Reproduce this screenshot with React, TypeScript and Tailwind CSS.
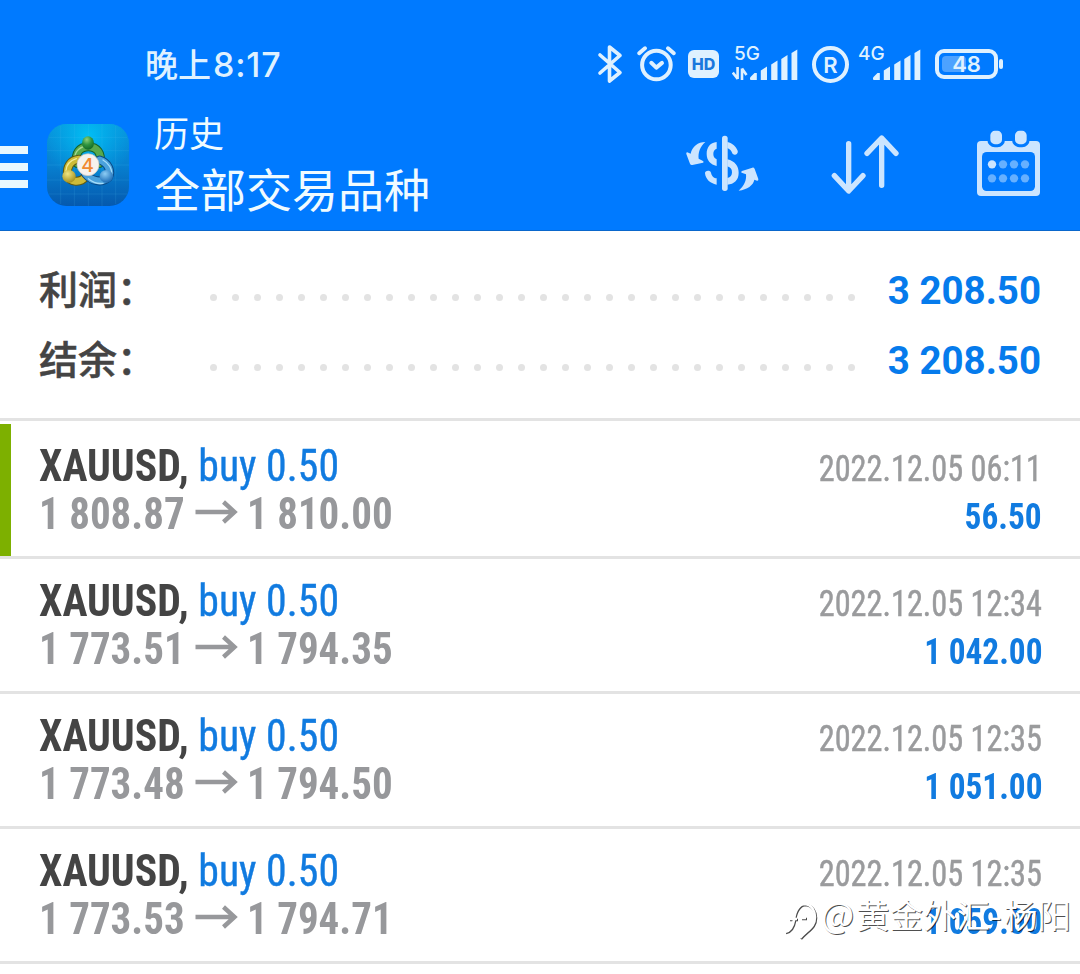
import type { ReactNode } from 'react'

interface Deal {
  open: string
  close: string
  time: string
  profit: string
  marked?: boolean
}

const deals: Deal[] = [
  { open: '1 808.87', close: '1 810.00', time: '2022.12.05 06:11', profit: '56.50', marked: true },
  { open: '1 773.51', close: '1 794.35', time: '2022.12.05 12:34', profit: '1 042.00' },
  { open: '1 773.48', close: '1 794.50', time: '2022.12.05 12:35', profit: '1 051.00' },
  { open: '1 773.53', close: '1 794.71', time: '2022.12.05 12:35', profit: '1 059.00' }
]

const totals = [
  { label: '利润：', value: '3 208.50' },
  { label: '结余：', value: '3 208.50' }
]

function SignalBars({ className }: { className?: string }) {
  return (
    <svg width="48" height="32" viewBox="0 0 48 32" fill="currentColor" className={className}>
      <path d="M0 28.5L4.5 24H6.8V31H1Q0 31 0 30Z" />
      <path d="M10.8 21.5L17 17.5V31H10.8Z" />
      <path d="M21.2 15.5L27.5 11.5V31H21.2Z" />
      <path d="M31.3 10L37.5 6V31H31.3Z" />
      <path d="M41.5 4L47.3 0.5V31H41.5Z" />
    </svg>
  )
}

function StatusBar() {
  return (
    <div className="flex h-12 items-start font-[Inter,Noto_Sans_CJK_SC,sans-serif] text-[#dff1ff]">
      <div className="ml-[145px] mt-px w-[451px] whitespace-nowrap text-[33px] font-medium leading-12">
        晚上<span className="ml-0.5 text-[34px] tracking-[0.8px]">8:17</span>
      </div>
      <svg width="40" height="48" viewBox="0 0 40 48" fill="none" stroke="currentColor" strokeWidth="3.6" strokeLinejoin="round" strokeLinecap="round">
        <path d="M4 15L24 32.5L13.5 41V7L24 15.5L4 33" />
      </svg>
      <svg width="52" height="48" viewBox="0 0 52 48" fill="none" stroke="currentColor" strokeWidth="4" strokeLinecap="round" strokeLinejoin="round">
        <circle cx="20.4" cy="25" r="14.3" />
        <path d="M3.2 13.2L9 8.3M32 8.3L37.8 13.2" />
        <path d="M15.3 22.8L20.3 27.6L26 22.9" />
      </svg>
      <div className="mt-[10px] flex h-[28px] w-[31px] items-center justify-center rounded-md bg-[#dff1ff] text-[16px] font-extrabold leading-none text-[#1a78dd]">
        HD
      </div>
      <div className="relative ml-[13px] h-12 w-[80px]">
        <span className="absolute left-[2px] top-[3px] text-[19px] font-medium leading-[22px]">5G</span>
        <svg width="16" height="14" viewBox="0 0 16 14" fill="none" stroke="currentColor" strokeWidth="2.6" className="absolute left-0 top-[27px]">
          <path d="M5.6 0V12M5.8 12L0.8 5.6M10 13V1.5M10 1.5L14.5 8" />
        </svg>
        <SignalBars className="absolute left-[18px] top-[9px]" />
      </div>
      <div className="mt-[6px] flex h-[37px] w-[37px] items-center justify-center rounded-full border-4 border-[#dff1ff] text-[22px] font-semibold leading-none">
        R
      </div>
      <div className="relative ml-[9px] h-12 w-[77px]">
        <span className="absolute left-0 top-[3px] text-[19px] font-medium leading-[22px]">4G</span>
        <SignalBars className="absolute left-[15px] top-[9px]" />
      </div>
      <div className="relative mt-[9px] flex h-[30px] w-[63px] items-center justify-center rounded-[9px] border-4 border-[#dff1ff]">
        <div className="absolute left-[3px] top-[3px] h-4 w-[24px] rounded-sm bg-white/30" />
        <span className="relative text-[22px] font-semibold leading-none">48</span>
      </div>
      <div className="ml-[1px] mt-[19px] h-[10px] w-[4px] rounded-full bg-[#dff1ff]" />
    </div>
  )
}

function AppLogo() {
  return (
    <svg width="82" height="82" viewBox="0 0 246 246">
      <defs>
        <linearGradient id="tile" x1="0" y1="0" x2="0" y2="1">
          <stop offset="0" stopColor="#0896dc" />
          <stop offset="0.5" stopColor="#0780d0" />
          <stop offset="1" stopColor="#0559ae" />
        </linearGradient>
        <radialGradient id="glow" cx="0.5" cy="0.15" r="0.55">
          <stop offset="0" stopColor="#00c4f8" stopOpacity="0.9" />
          <stop offset="1" stopColor="#00b4f0" stopOpacity="0" />
        </radialGradient>
        <radialGradient id="green" cx="0.4" cy="0.25" r="0.8">
          <stop offset="0" stopColor="#8fd07c" />
          <stop offset="0.5" stopColor="#2f9440" />
          <stop offset="1" stopColor="#0f6424" />
        </radialGradient>
        <radialGradient id="yellow" cx="0.4" cy="0.3" r="0.8">
          <stop offset="0" stopColor="#f0e684" />
          <stop offset="1" stopColor="#9c8610" />
        </radialGradient>
        <radialGradient id="blue" cx="0.4" cy="0.3" r="0.8">
          <stop offset="0" stopColor="#8ccdf5" />
          <stop offset="1" stopColor="#0c5fae" />
        </radialGradient>
      </defs>
      <rect width="246" height="246" rx="58" fill="url(#tile)" />
      <rect width="246" height="246" rx="58" fill="url(#glow)" />
      <path d="M41 6V240M82 0V246M124 0V246M165 0V246M206 6V240M6 40H240M0 80H246M0 123H246M0 168H246M6 210H240" stroke="#5cc4f4" strokeOpacity="0.22" strokeWidth="2" />
      <g fill="none" strokeLinecap="round">
        <path d="M90 118C82 88 98 68 124 68C150 68 166 88 158 118" stroke="#14602a" strokeWidth="27" />
        <path d="M90 118C82 88 98 68 124 68C150 68 166 88 158 118" stroke="#58a94c" strokeWidth="21" />
        <path d="M83 104C83 82 100 66 124 66" stroke="#a5d890" strokeWidth="4" />
        <path d="M96 106C70 108 58 130 62 152C68 176 100 178 116 158" stroke="#5f5a12" strokeWidth="27" />
        <path d="M96 106C70 108 58 130 62 152C68 176 100 178 116 158" stroke="#cdbb38" strokeWidth="21" />
        <path d="M88 104C68 110 58 124 57 140" stroke="#f4eb98" strokeWidth="4" />
        <path d="M158 108C184 116 194 142 184 160C164 178 134 172 116 150" stroke="#0b4a86" strokeWidth="27" />
        <path d="M158 108C184 116 194 142 184 160C164 178 134 172 116 150" stroke="#4ba2dc" strokeWidth="21" />
        <path d="M168 108C186 118 196 136 194 150M124 164C138 176 152 180 168 178" stroke="#a6dcf8" strokeWidth="4" />
      </g>
      <ellipse cx="123" cy="57" rx="18" ry="20" fill="url(#green)" />
      <ellipse cx="66" cy="157" rx="20" ry="19" fill="url(#yellow)" />
      <ellipse cx="178" cy="157" rx="20" ry="19" fill="url(#blue)" />
      <circle cx="123" cy="122" r="33" fill="#f6f2ee" stroke="#c9c4bd" strokeWidth="2" />
      <text x="122" y="143" textAnchor="middle" fontSize="58" fontWeight="500" fontFamily="Inter, sans-serif" fill="#f08a32">4</text>
    </svg>
  )
}

function DollarIcon() {
  return (
    <svg width="110" height="90" viewBox="0 0 330 270" fill="#cce5ff">
      <rect x="156" y="47" width="17" height="166" rx="8" />
      <path d="M140 66C120 68 110 82 110 102C110 122 122 134 140 138V118C132 114 130 108 130 102C130 94 133 88 140 86Z" />
      <path d="M105 160C104 151 121 150 123 158C126 170 132 174 140 175V194C120 190 107 178 105 160Z" />
      <path d="M172 66C188 70 198 80 203 92C206 103 191 109 187 100C184 92 180 87 172 84Z" />
      <path d="M172 118C195 124 206 138 206 158C206 180 193 192 172 194V174C182 172 186 166 186 157C186 147 182 142 172 139Z" />
      <path d="M106 66C84 66 66 80 62 101L52 97Q47 97 49 102L60 131Q62 136 67 135L99 128Q103 126 99 123L86 116C84 98 90 80 106 66Z" />
      <path d="M206 212C232 208 250 196 253 179L261 182Q266 183 265 177L254 147Q252 142 247 143L216 153Q211 156 215 158L228 163C230 182 222 198 206 212Z" />
    </svg>
  )
}

function SortIcon() {
  return (
    <svg width="90" height="90" viewBox="0 0 270 270" fill="none" stroke="#cce5ff" strokeWidth="16" strokeLinecap="round" strokeLinejoin="round">
      <path d="M86 71V212M43 167L86 213L129 167" />
      <path d="M185 196V55M141 100L185 54L228 100" />
    </svg>
  )
}

function CalendarIcon() {
  return (
    <svg width="80" height="90" viewBox="0 0 240 270">
      <rect x="21" y="63" width="189" height="165" rx="12" fill="#cce5ff" />
      <rect x="36" y="96" width="159" height="117" rx="14" fill="#007aff" />
      <g fill="#cce5ff" stroke="#007aff" strokeWidth="9">
        <rect x="56.5" y="28" width="44" height="49" rx="18" />
        <rect x="130.5" y="28" width="44" height="49" rx="18" />
      </g>
      {[133, 175].map((cy) =>
        [66, 99, 132, 165].map((cx) => (
          <circle key={`${cx}-${cy}`} cx={cx} cy={cy} r="12.5" fill={cx === 66 && cy === 133 ? '#cce5ff' : '#66b0ff'} />
        ))
      )}
    </svg>
  )
}

function Header() {
  return (
    <header className="h-[231px] border-b border-[#0a67cc] bg-[#007aff] pt-10">
      <StatusBar />
      <div className="mt-[22px] flex h-[120px] items-start">
        <div className="mt-9 flex w-[28px] flex-col gap-[9px]">
          <div className="h-[8px] bg-[#e8f8ff]" />
          <div className="h-[8px] bg-[#e8f8ff]" />
          <div className="h-[8px] bg-[#e8f8ff]" />
        </div>
        <div className="ml-[19px] mt-[14px]">
          <AppLogo />
        </div>
        <div className="ml-[25px] whitespace-nowrap text-[#f0fbff]">
          <div className="mt-[1px] text-[35px] leading-[42px]">历史</div>
          <div className="text-[46px] leading-[68px]">全部交易品种</div>
        </div>
        <div className="ml-auto mr-[30px] mt-[10px] flex">
          <DollarIcon />
          <div className="ml-10">
            <SortIcon />
          </div>
          <div className="ml-[60px]">
            <CalendarIcon />
          </div>
        </div>
      </div>
    </header>
  )
}

// the condensed face is squeezed a bit further, so each text gets its own scale
function Squeezed({ children, className }: { children: ReactNode; className: string }) {
  return <div className={`whitespace-pre ${className}`}>{children}</div>
}

function DealRow({ deal }: { deal: Deal }) {
  return (
    <div className="flex h-[135px] border-b-[3px] border-[#e3e3e3] font-[Roboto_Condensed,Roboto,sans-serif] [font-stretch:75%]">
      <div className={deal.marked ? 'w-[11px] bg-[#7db000]' : 'w-[11px]'} />
      <div className="ml-[28px] mt-[18px] flex-1">
        <Squeezed className="w-[320px] origin-left scale-x-[0.95] text-[44px] leading-12">
          <span className="font-bold text-[#444444]">XAUUSD, </span>
          <span className="text-[#117be0] [-webkit-text-stroke:0.4px]">buy 0.50</span>
        </Squeezed>
        <div className="flex text-[44px] font-bold leading-12 text-[#97989b]">
          <Squeezed className="w-[156px] origin-left scale-x-[0.932]">{deal.open}</Squeezed>
          <svg width="44" height="24" viewBox="0 0 44 24" fill="none" stroke="currentColor" strokeWidth="4.4" className="mt-[10px] mr-[8px]">
            <path d="M0.5 12H40M28.500 2L39.500 12L28.500 22" />
          </svg>
          <Squeezed className="origin-left scale-x-[0.932]">{deal.close}</Squeezed>
        </div>
      </div>
      <div className="mr-[38px] mt-[21px] flex flex-col items-end text-[37px] leading-12">
        <Squeezed className="origin-right scale-x-[0.872] text-[#9a9b9d] [-webkit-text-stroke:0.5px]">{deal.time}</Squeezed>
        <Squeezed className="origin-right scale-x-[0.9] font-bold text-[#117be0]">{deal.profit}</Squeezed>
      </div>
    </div>
  )
}

function Watermark() {
  return (
    <div className="absolute left-[784px] top-[888px] flex items-start whitespace-nowrap text-[33.5px] leading-[50px] text-white [text-shadow:1px_1px_0_rgb(0_0_0/0.7)]">
      <svg width="34" height="46" viewBox="0 0 34 46" fill="none" className="mt-[7px] drop-shadow-[1px_1px_0_rgba(0,0,0,0.7)]">
        <path d="M1 37C7 36 9 31 10 25C11 14 16 9 21 9C28 10 31 16 31 22C31 32 24 34 16 43M5 24H13M17 23H22" stroke="#fff" strokeWidth="2.6" />
      </svg>
      <span className="ml-[3px]">
        <span className="inline-block w-[35px] text-[35px]">@</span>黄金外汇<span className="inline-block w-[14px]">-</span>杨阳
      </span>
    </div>
  )
}

export default function App() {
  return (
    <div className="relative h-[974px] w-[1080px] overflow-hidden bg-white font-['Noto_Sans_CJK_SC',sans-serif]">
      <Header />
      <section className="mb-[3px] h-[190px] border-b-[3px] border-[#e3e3e3] pt-[25px]">
        {totals.map((total) => (
          <div key={total.label} className="flex h-[70px] items-center">
            <span className="-mt-2 ml-[39px] w-[171px] text-[39px] font-medium text-[#444444] [-webkit-text-stroke:0.5px]">{total.label}</span>
            <div className="mt-[13px] flex gap-[15px]">
              {Array.from({ length: 30 }, (_, i) => (
                <i key={i} className="size-[7px] rounded-full bg-[#e3e3e3]" />
              ))}
            </div>
            <span className="ml-auto mr-[39px] font-[Roboto,sans-serif] text-[38.5px] font-bold text-[#067bec]">{total.value}</span>
          </div>
        ))}
      </section>
      {deals.map((deal) => (
        <DealRow key={deal.open} deal={deal} />
      ))}
      <Watermark />
    </div>
  )
}
